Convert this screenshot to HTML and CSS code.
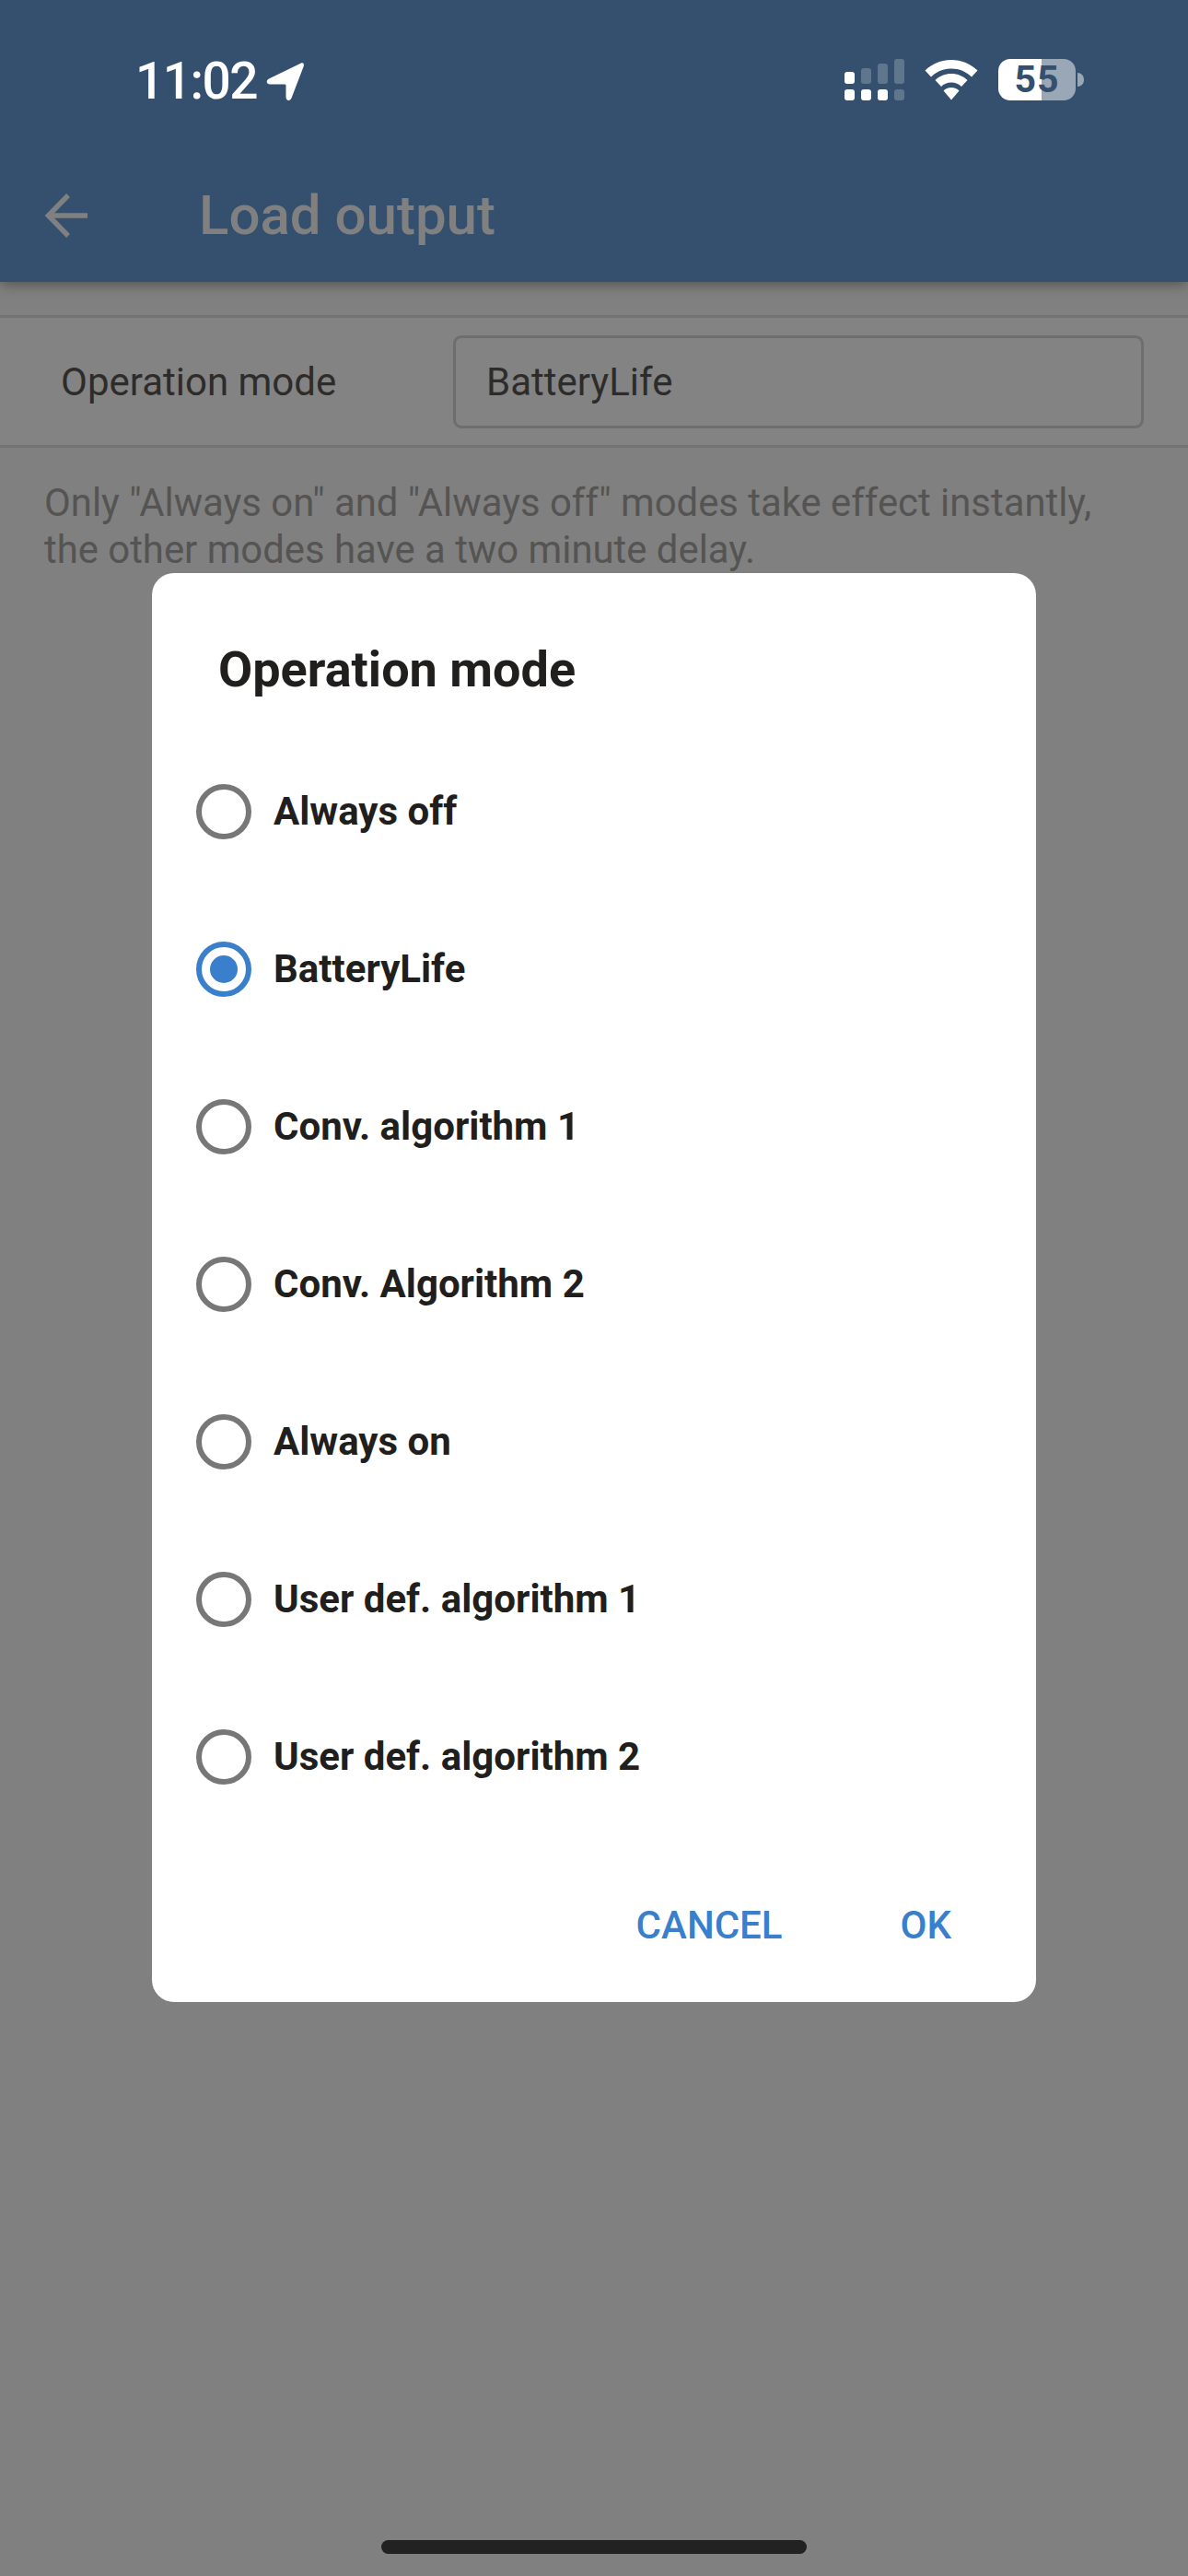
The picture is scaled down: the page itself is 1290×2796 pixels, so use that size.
FILE: index.html
```html
<!DOCTYPE html>
<html lang="en">
<head>
<meta charset="utf-8">
<title>Load output</title>
<link rel="stylesheet" href="styles.css">
</head>
<body>
	<div class="app">
		<header class="top">
			<div class="status">
				<div class="status_left">
					<span class="clock">11:02</span>
					<svg class="loc" viewBox="0 0 41 41" width="41" height="41"><path d="M37.500 .800 3 17.500c-3.500 1.700-2.800 6 1.200 6H20c1 0 1.500.5 1.500 1.500v12.500c0 4 4.500 4.800 6 1.100L40.500 4.500C41.700 1.200 40.300-.500 37.500 .800Z" fill="#fff"/></svg>
				</div>
				<div class="status_right">
					<svg class="signal" viewBox="0 0 65 45" width="65" height="45">
						<g fill="#fff" fill-opacity=".22">
							<rect x="18" y="10" width="11" height="17" rx="3"/>
							<rect x="36" y="5" width="11" height="22" rx="3"/>
							<rect x="54" y="0" width="11" height="27" rx="3"/>
							<rect x="54" y="33" width="11" height="12" rx="3"/>
						</g>
						<g fill="#fff">
							<rect x="0" y="14" width="11" height="13" rx="3"/>
							<rect x="0" y="33" width="11" height="12" rx="3"/>
							<rect x="18" y="33" width="11" height="12" rx="3"/>
							<rect x="36" y="33" width="11" height="12" rx="3"/>
						</g>
					</svg>
					<svg class="wifi" viewBox="0 0 58 44" width="58" height="44">
						<path d="M29 0C18 0 8 4.300 .500 11.500l6.500 7C12.800 12.800 20.500 9.500 29 9.500s16.200 3.300 22 9l6.500-7C50 4.300 40 0 29 0Z" fill="#fff"/>
						<path d="M29 15c-7 0-13 2.700-17.500 7l6.500 7c2.800-2.800 6.700-4.500 11-4.500s8.200 1.700 11 4.500l6.500-7C42 17.700 36 15 29 15Z" fill="#fff"/>
						<path d="M29 30c-3.500 0-6.500 1.300-8.500 3.500L29 43.500l8.500-10C35.500 31.300 32.500 30 29 30Z" fill="#fff"/>
					</svg>
					<div class="battery">
						<div class="battery_body">
							<span class="battery_num">55</span>
						</div>
						<div class="battery_cap"></div>
					</div>
				</div>
			</div>
			<div class="toolbar">
				<svg class="back" viewBox="0 0 48 48" width="48" height="48"><path d="M47 24H5M26 2 4.500 24 26 46" fill="none" stroke="#808080" stroke-width="5.500"/></svg>
				<h1 class="title">Load output</h1>
			</div>
		</header>

		<main class="content">
			<div class="row">
				<span class="row_label">Operation mode</span>
				<div class="field">BatteryLife</div>
			</div>
			<p class="note">Only "Always on" and "Always off" modes take effect instantly, the other modes have a two minute delay.</p>
		</main>

		<div class="dialog">
			<h2 class="dialog_title">Operation mode</h2>
			<ul class="options">
				<li class="option"><span class="radio"></span>Always off</li>
				<li class="option"><span class="radio checked"></span>BatteryLife</li>
				<li class="option"><span class="radio"></span>Conv. algorithm 1</li>
				<li class="option"><span class="radio"></span>Conv. Algorithm 2</li>
				<li class="option"><span class="radio"></span>Always on</li>
				<li class="option"><span class="radio"></span>User def. algorithm 1</li>
				<li class="option"><span class="radio"></span>User def. algorithm 2</li>
			</ul>
			<div class="actions">
				<span class="action">CANCEL</span>
				<span class="action">OK</span>
			</div>
		</div>

		<div class="home_bar"></div>
	</div>
</body>
</html>
```

FILE: styles.css
```css
* {
	box-sizing: border-box;
	font-family: Roboto, "Liberation Sans", sans-serif;
}

html, body {
	margin: 0;
	padding: 0;
}

.app {
	position: relative;
	width: 1290px;
	height: 2796px;
	background-color: #808080;
	overflow: hidden;
}

.top {
	height: 306px;
	background-color: #34506e;
	box-shadow: 0 2px 14px rgba(0, 0, 0, 0.4);
	position: relative;
}

.status {
	height: 204px;
	padding: 64px 113px 0 147px;
	display: flex;
	justify-content: space-between;
	align-items: flex-start;
}

.status_left {
	display: flex;
	align-items: center;
	gap: 10px;
	padding-top: 2px;
}

.clock {
	color: #fff;
	font-size: 55px;
	line-height: 45px;
	font-weight: 500;
	letter-spacing: -1.5px;
}

.status_right {
	display: flex;
	align-items: center;
	gap: 22px;
}

.battery {
	display: flex;
	align-items: center;
	gap: 2px;
}

.battery_body {
	width: 84px;
	height: 45px;
	border-radius: 13px;
	background: linear-gradient(to right, #fff 0, #fff 47px, #9aa7b6 47px, #9aa7b6 100%);
	display: flex;
	align-items: center;
	justify-content: center;
}

.battery_num {
	color: #34506e;
	font-size: 41px;
	line-height: 45px;
	font-weight: 700;
	letter-spacing: 1px;
}

.battery_cap {
	width: 7px;
	height: 15px;
	border-radius: 0 7px 7px 0;
	background-color: #9aa7b6;
}

.toolbar {
	display: flex;
	align-items: center;
	height: 60px;
	padding-left: 48px;
}

.back {
	flex: none;
}

.title {
	margin: 0 0 0 120px;
	color: #808080;
	font-size: 60px;
	line-height: 60px;
	font-weight: 500;
}

.row {
	margin-top: 36px;
	height: 144px;
	border-top: 3px solid #737373;
	border-bottom: 3px solid #737373;
	background-color: #838383;
	display: flex;
	align-items: center;
	padding: 0 48px 0 66px;
}

.row_label {
	width: 426px;
	flex: none;
	color: #2e2c2b;
	font-size: 42px;
}

.field {
	flex: 1;
	height: 101px;
	border: 3px solid #6e6e6e;
	border-radius: 9px;
	padding-left: 33px;
	color: #2e2c2b;
	font-size: 42px;
	line-height: 95px;
}

.note {
	margin: 34px 0 0;
	padding: 0 48px;
	color: #555453;
	font-size: 41.85px;
	line-height: 51px;
}

.dialog {
	position: absolute;
	left: 165px;
	top: 622px;
	width: 960px;
	height: 1551px;
	background-color: #fff;
	border-radius: 24px;
	padding: 75px 48px 0;
}

.dialog_title {
	margin: 0 0 0 24px;
	color: #211f1e;
	font-size: 54px;
	line-height: 60px;
	font-weight: 700;
}

.options {
	list-style: none;
	margin: 38px 0 0;
	padding: 0;
}

.option {
	height: 171px;
	display: flex;
	align-items: center;
	gap: 24px;
	color: #211f1e;
	font-size: 42px;
	font-weight: 700;
}

.radio {
	flex: none;
	width: 60px;
	height: 60px;
	border: 6px solid #777;
	border-radius: 50%;
	display: flex;
	align-items: center;
	justify-content: center;
}

.radio.checked {
	border-color: #3a7fcb;
}

.radio.checked::after {
	content: "";
	width: 30px;
	height: 30px;
	border-radius: 50%;
	background-color: #3a7fcb;
}

.actions {
	margin-top: 73px;
	display: flex;
	justify-content: flex-end;
	gap: 128px;
	padding-right: 44px;
}

.action {
	color: #3a7fcb;
	font-size: 42px;
	line-height: 50px;
	font-weight: 500;
}

.home_bar {
	position: absolute;
	left: 414px;
	top: 2757px;
	width: 462px;
	height: 15px;
	border-radius: 8px;
	background-color: #222;
}
```
